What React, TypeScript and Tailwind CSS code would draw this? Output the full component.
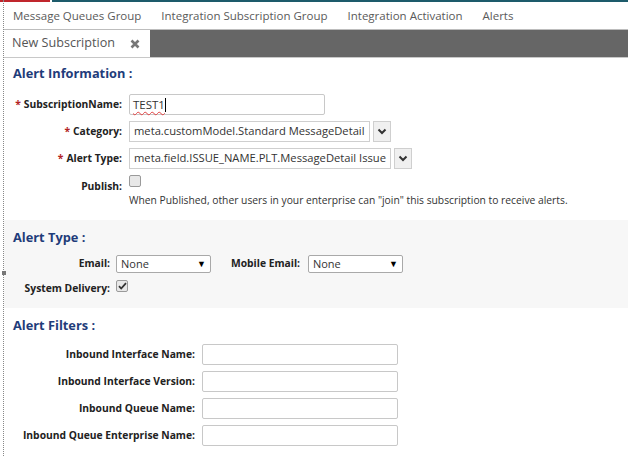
import { useState } from "react";

const navItems = [
  "Message Queues Group",
  "Integration Subscription Group",
  "Integration Activation",
  "Alerts",
];

const filterFields = [
  "Inbound Interface Name:",
  "Inbound Interface Version:",
  "Inbound Queue Name:",
  "Inbound Queue Enterprise Name:",
];

function Req() {
  return <span className="text-[#b22222] mr-[3px]">*</span>;
}

function Chevron() {
  return (
    <svg width="10" height="7" viewBox="0 0 10 7" fill="none">
      <path d="M1.5 1.5L5 5l3.5-3.5" stroke="#333" strokeWidth="2" />
    </svg>
  );
}

function TextBox({ w }: { w: string }) {
  return <div className={`${w} h-[21px] bg-white border border-[#c8c8c8] rounded-[2px]`} />;
}

function SelectBox({ value }: { value: string }) {
  return (
    <div className="flex items-center h-[21px] gap-[3px]">
      <div className="h-full flex items-center px-[4px] bg-white border border-[#cfcfcf] text-[11.2px] text-[#333] whitespace-nowrap">
        {value}
      </div>
      <div className="h-full w-[18px] flex items-center justify-center bg-[#f0f0f0] border border-[#cfcfcf]">
        <Chevron />
      </div>
    </div>
  );
}

function NativeSelect() {
  return (
    <div className="w-[95px] h-[18px] flex items-center justify-between px-[4px] bg-white border border-[#a9a9a9] rounded-[2px] text-[11px] font-normal text-[#333]">
      <span>None</span>
      <span className="text-[9px] text-black">▼</span>
    </div>
  );
}

function Check({ checked }: { checked: boolean }) {
  return (
    <div className="w-[12px] h-[12px] rounded-[2px] border border-[#9a9a9a] bg-[#e8e8e8] flex items-center justify-center">
      {checked && (
        <svg width="9" height="8" viewBox="0 0 9 8">
          <path d="M1 4.2l2.2 2.3L8 1.2" stroke="#333" strokeWidth="1.8" fill="none" />
        </svg>
      )}
    </div>
  );
}

export default function App() {
  const [name] = useState("TEST1");

  return (
    <div
      className="relative w-[628px] h-[456px] bg-white overflow-hidden text-[#333]"
      style={{ fontFamily: "'Open Sans', 'Liberation Sans', sans-serif" }}
    >
      {/* dotted frame edge */}
      <div className="absolute left-[3px] top-0 bottom-0 border-l border-dotted border-[#888]" />
      <div className="absolute left-[2px] top-[271px] w-[4px] h-[4px] bg-[#777]" />

      {/* top accent line */}
      <div className="flex h-[2px]">
        <div className="w-[50px] bg-[#c0262d]" />
        <div className="w-[2px]" />
        <div className="flex-1 bg-[#1d5b6b]" />
      </div>

      {/* nav */}
      <div className="flex items-center h-[27px] pl-[13px] gap-[20px] text-[11.5px] text-[#5a5a5a]">
        {navItems.map((n) => (
          <span key={n} className="whitespace-nowrap">{n}</span>
        ))}
      </div>

      {/* tab bar */}
      <div className="ml-[4px] h-[29px] bg-[#666] border-t border-[#bdbdbd] border-b border-b-[#c8c8c8] flex items-end">
        <div className="h-[27px] w-[146px] bg-white flex items-center pl-[8px] gap-[15px] text-[12.6px] text-[#555] whitespace-nowrap">
          <span>New Subscription</span>
          <svg width="10" height="10" viewBox="0 0 10 10">
            <path d="M1.5 1.5l7 7M8.5 1.5l-7 7" stroke="#777" strokeWidth="2.6" />
          </svg>
        </div>
      </div>

      {/* Alert Information */}
      <div className="pl-[13px] pt-[6px]">
        <h2 className="text-[12.8px] font-bold text-[#1f3c7a]">Alert Information :</h2>
        <div className="mt-[11px] flex flex-col text-[10.3px] font-bold text-[#222]">
          <div className="flex items-center h-[21px]">
            <div className="w-[109px] text-right whitespace-nowrap"><Req />SubscriptionName:</div>
            <div className="ml-[7px] w-[196px] h-[21px] bg-white border border-[#c8c8c8] rounded-[2px] flex items-center px-[3px] text-[11.5px] font-normal text-[#333]">
              <span className="underline decoration-wavy decoration-[#e04040] decoration-1 underline-offset-2">{name}</span>
              <span className="w-px h-[14px] bg-black" />
            </div>
          </div>
          <div className="flex items-center h-[21px] mt-[6px]">
            <div className="w-[109px] text-right whitespace-nowrap"><Req />Category:</div>
            <div className="ml-[7px] font-normal">
              <SelectBox value="meta.customModel.Standard MessageDetail" />
            </div>
          </div>
          <div className="flex items-center h-[21px] mt-[6px]">
            <div className="w-[109px] text-right whitespace-nowrap"><Req />Alert Type:</div>
            <div className="ml-[7px] font-normal">
              <SelectBox value="meta.field.ISSUE_NAME.PLT.MessageDetail Issue" />
            </div>
          </div>
          <div className="flex items-start mt-[5px]">
            <div className="w-[109px] text-right pt-[5px]">Publish:</div>
            <div className="ml-[7px]">
              <div className="pt-[1px]"><Check checked={false} /></div>
              <p className="mt-[6px] text-[10.3px] font-normal text-[#333] whitespace-nowrap">
                When Published, other users in your enterprise can "join" this subscription to receive alerts.
              </p>
            </div>
          </div>
        </div>
      </div>

      {/* Alert Type */}
      <div className="mt-[11px] ml-[4px] h-[88px] bg-[#f7f7f7] pl-[9px] pt-[8px]">
        <h2 className="text-[12.8px] font-bold text-[#1f3c7a]">Alert Type :</h2>
        <div className="mt-[8px] flex items-center text-[10.3px] font-bold text-[#222]">
          <div className="w-[97px] text-right">Email:</div>
          <div className="ml-[6px]"><NativeSelect /></div>
          <div className="ml-[20px] whitespace-nowrap">Mobile Email:</div>
          <div className="ml-[8px]"><NativeSelect /></div>
        </div>
        <div className="mt-[3px] flex items-center text-[10.3px] font-bold text-[#222]">
          <div className="w-[97px] text-right pt-[5px] whitespace-nowrap">System Delivery:</div>
          <div className="ml-[6px]"><Check checked={true} /></div>
        </div>
      </div>

      {/* Alert Filters */}
      <div className="pl-[13px] pt-[8px]">
        <h2 className="text-[12.8px] font-bold text-[#1f3c7a]">Alert Filters :</h2>
        <div className="mt-[9px] flex flex-col gap-[6px] text-[10.3px] font-bold text-[#222]">
          {filterFields.map((f) => (
            <div key={f} className="flex items-center">
              <div className="w-[182px] text-right whitespace-nowrap">{f}</div>
              <div className="ml-[7px]"><TextBox w="w-[196px]" /></div>
            </div>
          ))}
        </div>
      </div>
    </div>
  );
}
